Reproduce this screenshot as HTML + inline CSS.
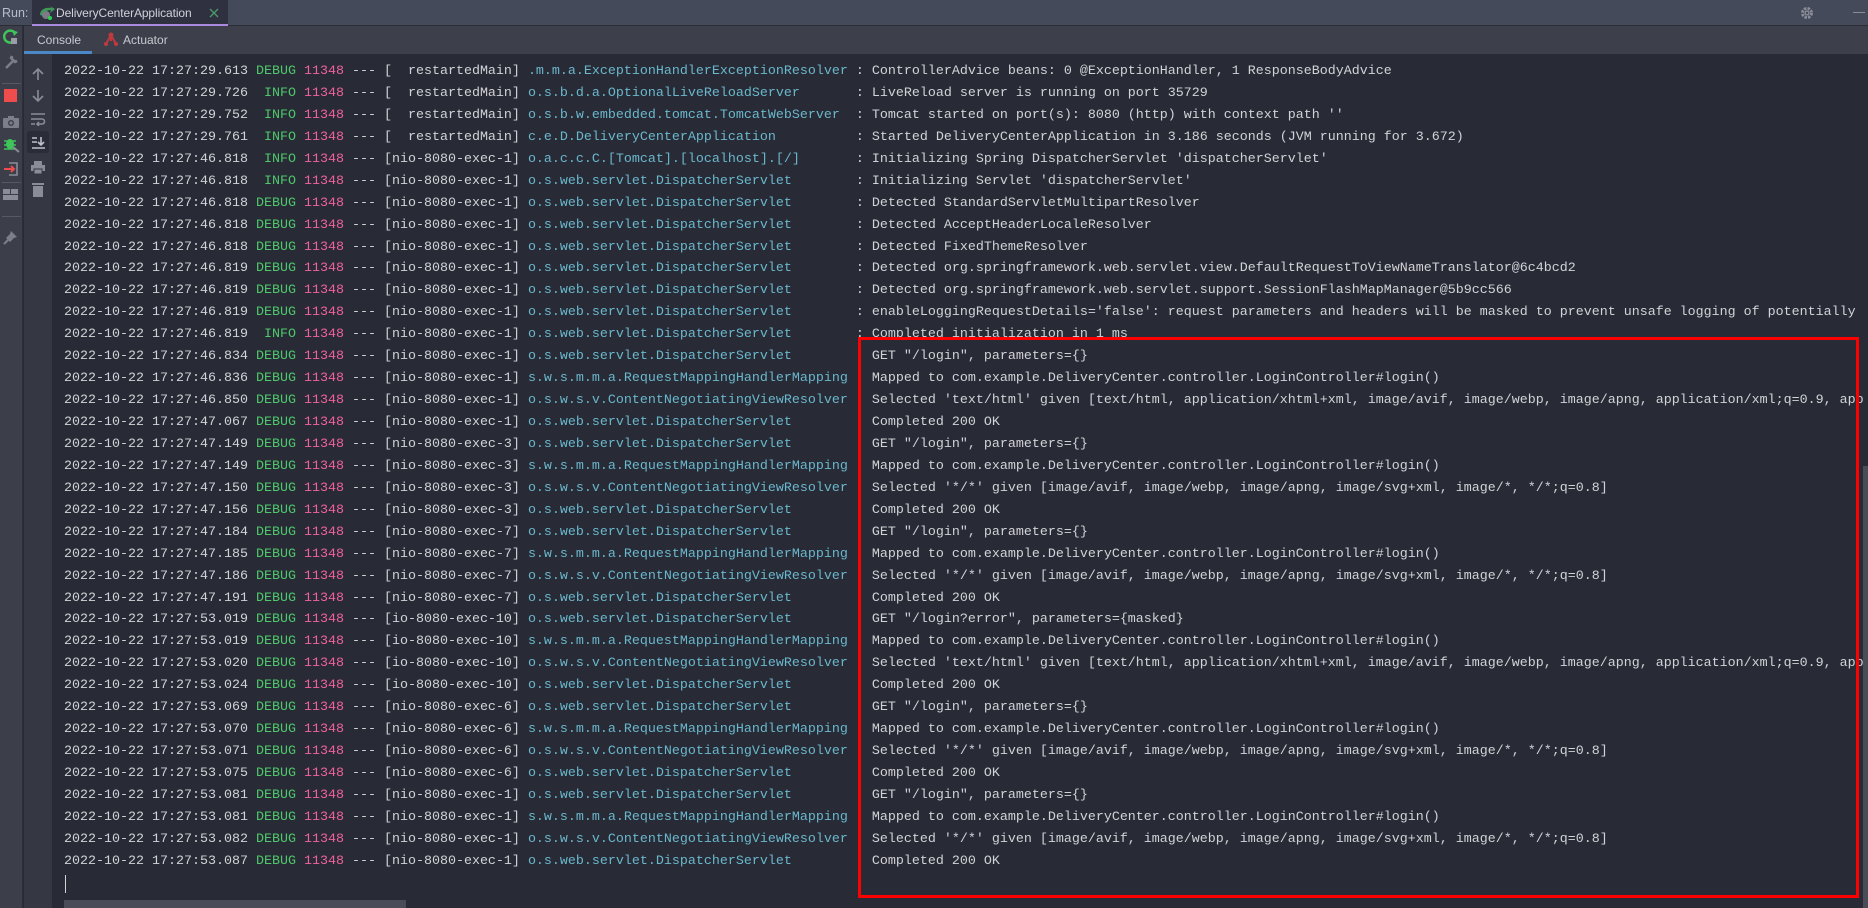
<!DOCTYPE html>
<html><head><meta charset="utf-8"><style>
*{margin:0;padding:0;box-sizing:border-box}
body{width:1868px;height:908px;background:#282a36;overflow:hidden;position:relative;font-family:"Liberation Sans",sans-serif}
.top{position:absolute;left:0;top:0;width:1868px;height:26px;background:#454a5b;border-bottom:1px solid #2a2c36}
.run{position:absolute;left:2px;top:6px;font-size:12.5px;color:#b8bcc8}
.tab{position:absolute;left:32px;top:0;width:196px;height:26px;background:#2f3140;border-bottom:2px solid #a98ae0}
.tab span{position:absolute;left:24px;top:6px;font-size:12px;letter-spacing:-0.1px;color:#d0d2da}
.sub{position:absolute;left:24px;top:26px;width:1844px;height:28px;background:#3d3f4a}
.lt{position:absolute;left:0;top:26px;width:23px;height:882px;background:#3c3e4a;border-right:1px solid #2c2e38}
.lt2{position:absolute;left:24px;top:54px;width:28px;height:854px;background:#353743}
.con{position:absolute;left:52px;top:54px;width:1811px;height:854px;background:#282a36;overflow:hidden}
.log{position:absolute;left:12px;top:7px;font-family:"Liberation Mono",monospace;font-size:13.33px;line-height:21.94px;white-space:pre;color:#d2d3d6}
.g{color:#4ec86a}.p{color:#f0639a}.c{color:#6ab8cc}
.box{position:absolute;left:858px;top:337px;width:1001px;height:561px;border:3px solid #ff0000}
.vs{position:absolute;left:1863px;top:466px;width:5px;height:442px;background:#4a4c57}
.hs{position:absolute;left:64px;top:900px;width:342px;height:8px;background:#4a4c57}
.cur{position:absolute;left:65px;top:875px;width:1px;height:18px;background:#d2d3d6}
.ic{position:absolute}
</style></head><body>
<div class="top">
<div class="run">Run:</div>
<div class="tab">
<svg class="ic" style="left:6px;top:5px" width="18" height="16"><path d="M2 10 C2 4 8 2 14 3 L12 1 L17 4 L12 8 L13 5 C9 5 6 7 6 11 Z" fill="#3f9a5a"/><circle cx="8" cy="10" r="4" fill="#7a7c86"/><circle cx="12" cy="13" r="2" fill="#2bd14a"/></svg>
<span>DeliveryCenterApplication</span>
<svg class="ic" style="left:177px;top:8px" width="10" height="10"><path d="M1 1L9 9M9 1L1 9" stroke="#4f9a6a" stroke-width="1.3"/></svg>
</div>
<svg class="ic" style="left:1800px;top:6px" width="14" height="14"><circle cx="7" cy="7" r="4.5" fill="none" stroke="#8a8d98" stroke-width="3" stroke-dasharray="2.4 1.2"/><circle cx="7" cy="7" r="2.5" fill="#8a8d98"/><circle cx="7" cy="7" r="1.2" fill="#454a5b"/></svg>
<div style="position:absolute;top:12px;width:12px;height:1px;background:#8a8d98;left:1853px"></div>
</div>
<div class="sub">
<div style="position:absolute;left:13px;top:7px;font-size:12px;color:#c8cad2">Console</div>
<div style="position:absolute;left:0;top:25px;width:68px;height:3px;background:#4a88c7"></div>
<svg class="ic" style="left:80px;top:6px" width="14" height="14"><path d="M2 12L7 3L12 12M7 3L7 9" stroke="#c0393f" stroke-width="2" fill="none"/><circle cx="7" cy="3" r="2.5" fill="#c0393f"/><circle cx="2" cy="12" r="2" fill="#c0393f"/><circle cx="12" cy="12" r="2" fill="#c0393f"/></svg>
<div style="position:absolute;left:99px;top:7px;font-size:12px;color:#c8cad2">Actuator</div>
</div>
<div class="lt">
<svg class="ic" style="left:3px;top:3px" width="16" height="16"><path d="M12 4A6 6 0 1 0 13 9" stroke="#3fc45a" stroke-width="2.5" fill="none"/><path d="M9 1L15 3L11 7Z" fill="#3fc45a"/><rect x="8" y="9" width="6" height="6" fill="#9a9ca6"/></svg>
<svg class="ic" style="left:3px;top:28px" width="16" height="16"><path d="M3 14L10 7M9 2A4 4 0 0 0 14 7L12 8L8 4Z" stroke="#7c7f8a" stroke-width="2.5" fill="#7c7f8a"/></svg>
<div style="position:absolute;left:2px;top:57px;width:19px;height:1px;background:#555866"></div>
<div style="position:absolute;left:4px;top:63px;width:13px;height:13px;background:#ef4d4d"></div>
<svg class="ic" style="left:2px;top:89px" width="18" height="14"><rect x="1" y="3" width="16" height="10" rx="1" fill="#7c7f8a"/><rect x="6" y="1" width="6" height="3" fill="#7c7f8a"/><circle cx="9" cy="8" r="3" fill="#3c3e4a"/><circle cx="9" cy="8" r="1.6" fill="#7c7f8a"/></svg>
<svg class="ic" style="left:3px;top:110px" width="17" height="17"><ellipse cx="7" cy="8" rx="4" ry="5" fill="#3fc45a"/><path d="M1 5L13 5M1 9L13 9M1 13L13 13" stroke="#3fc45a" stroke-width="1.5"/><path d="M10 11L16 16" stroke="#8a8d98" stroke-width="2"/></svg>
<svg class="ic" style="left:3px;top:135px" width="16" height="16"><path d="M6 2H14V14H6" stroke="#8a8d98" stroke-width="1.6" fill="none"/><path d="M1 8H11M8 5L11 8L8 11" stroke="#ef4d4d" stroke-width="2" fill="none"/></svg>
<div style="position:absolute;left:2px;top:156px;width:19px;height:1px;background:#555866"></div>
<svg class="ic" style="left:3px;top:163px" width="16" height="12"><rect x="0" y="0" width="7" height="5" fill="#8a8d98"/><rect x="8" y="0" width="7" height="5" fill="#8a8d98"/><rect x="0" y="6" width="15" height="5" fill="#8a8d98"/></svg>
<div style="position:absolute;left:2px;top:190px;width:19px;height:1px;background:#555866"></div>
<svg class="ic" style="left:3px;top:203px" width="16" height="16"><path d="M8 2L14 8L11 9L7 13L3 9L7 5Z" fill="#7c7f8a"/><path d="M5 11L1 15" stroke="#7c7f8a" stroke-width="2"/></svg>
</div>
<div class="lt2">
<svg class="ic" style="left:7px;top:13px" width="14" height="14"><path d="M7 13V2M2 7L7 2L12 7" stroke="#8a8d98" stroke-width="1.6" fill="none"/></svg>
<svg class="ic" style="left:7px;top:35px" width="14" height="14"><path d="M7 1V12M2 7L7 12L12 7" stroke="#8a8d98" stroke-width="1.6" fill="none"/></svg>
<svg class="ic" style="left:6px;top:58px" width="16" height="14"><path d="M1 2H15M1 7H12A2.5 2.5 0 0 1 12 12H8M1 12H5M9 10L7 12L9 14" stroke="#8a8d98" stroke-width="1.6" fill="none"/></svg>
<div style="position:absolute;left:3px;top:77px;width:22px;height:22px;background:#2a2c37;border-radius:3px"></div>
<svg class="ic" style="left:7px;top:81px" width="15" height="15"><path d="M1 3H6M1 7H6M1 13H14M10 2V10M7 7L10 10L13 7" stroke="#c0c2ca" stroke-width="1.6" fill="none"/></svg>
<svg class="ic" style="left:6px;top:106px" width="16" height="15"><rect x="4" y="1" width="8" height="4" fill="#8a8d98"/><rect x="1" y="5" width="14" height="6" fill="#8a8d98"/><rect x="4" y="9" width="8" height="5" fill="#8a8d98" stroke="#353743"/></svg>
<svg class="ic" style="left:7px;top:128px" width="14" height="16"><rect x="1" y="1" width="12" height="2" fill="#8a8d98"/><rect x="2" y="4" width="10" height="11" fill="#8a8d98"/></svg>
</div>
<div class="con">
<div class="log">2022-10-22 17:27:29.613 <span class="g">DEBUG</span> <span class="p">11348</span> --- [  restartedMain] <span class="c">.m.m.a.ExceptionHandlerExceptionResolver</span> : ControllerAdvice beans: 0 @ExceptionHandler, 1 ResponseBodyAdvice
2022-10-22 17:27:29.726  <span class="g">INFO</span> <span class="p">11348</span> --- [  restartedMain] <span class="c">o.s.b.d.a.OptionalLiveReloadServer      </span> : LiveReload server is running on port 35729
2022-10-22 17:27:29.752  <span class="g">INFO</span> <span class="p">11348</span> --- [  restartedMain] <span class="c">o.s.b.w.embedded.tomcat.TomcatWebServer </span> : Tomcat started on port(s): 8080 (http) with context path ''
2022-10-22 17:27:29.761  <span class="g">INFO</span> <span class="p">11348</span> --- [  restartedMain] <span class="c">c.e.D.DeliveryCenterApplication         </span> : Started DeliveryCenterApplication in 3.186 seconds (JVM running for 3.672)
2022-10-22 17:27:46.818  <span class="g">INFO</span> <span class="p">11348</span> --- [nio-8080-exec-1] <span class="c">o.a.c.c.C.[Tomcat].[localhost].[/]      </span> : Initializing Spring DispatcherServlet 'dispatcherServlet'
2022-10-22 17:27:46.818  <span class="g">INFO</span> <span class="p">11348</span> --- [nio-8080-exec-1] <span class="c">o.s.web.servlet.DispatcherServlet       </span> : Initializing Servlet 'dispatcherServlet'
2022-10-22 17:27:46.818 <span class="g">DEBUG</span> <span class="p">11348</span> --- [nio-8080-exec-1] <span class="c">o.s.web.servlet.DispatcherServlet       </span> : Detected StandardServletMultipartResolver
2022-10-22 17:27:46.818 <span class="g">DEBUG</span> <span class="p">11348</span> --- [nio-8080-exec-1] <span class="c">o.s.web.servlet.DispatcherServlet       </span> : Detected AcceptHeaderLocaleResolver
2022-10-22 17:27:46.818 <span class="g">DEBUG</span> <span class="p">11348</span> --- [nio-8080-exec-1] <span class="c">o.s.web.servlet.DispatcherServlet       </span> : Detected FixedThemeResolver
2022-10-22 17:27:46.819 <span class="g">DEBUG</span> <span class="p">11348</span> --- [nio-8080-exec-1] <span class="c">o.s.web.servlet.DispatcherServlet       </span> : Detected org.springframework.web.servlet.view.DefaultRequestToViewNameTranslator@6c4bcd2
2022-10-22 17:27:46.819 <span class="g">DEBUG</span> <span class="p">11348</span> --- [nio-8080-exec-1] <span class="c">o.s.web.servlet.DispatcherServlet       </span> : Detected org.springframework.web.servlet.support.SessionFlashMapManager@5b9cc566
2022-10-22 17:27:46.819 <span class="g">DEBUG</span> <span class="p">11348</span> --- [nio-8080-exec-1] <span class="c">o.s.web.servlet.DispatcherServlet       </span> : enableLoggingRequestDetails='false': request parameters and headers will be masked to prevent unsafe logging of potentially sensitive data
2022-10-22 17:27:46.819  <span class="g">INFO</span> <span class="p">11348</span> --- [nio-8080-exec-1] <span class="c">o.s.web.servlet.DispatcherServlet       </span> : Completed initialization in 1 ms
2022-10-22 17:27:46.834 <span class="g">DEBUG</span> <span class="p">11348</span> --- [nio-8080-exec-1] <span class="c">o.s.web.servlet.DispatcherServlet       </span>   GET "/login", parameters={}
2022-10-22 17:27:46.836 <span class="g">DEBUG</span> <span class="p">11348</span> --- [nio-8080-exec-1] <span class="c">s.w.s.m.m.a.RequestMappingHandlerMapping</span>   Mapped to com.example.DeliveryCenter.controller.LoginController#login()
2022-10-22 17:27:46.850 <span class="g">DEBUG</span> <span class="p">11348</span> --- [nio-8080-exec-1] <span class="c">o.s.w.s.v.ContentNegotiatingViewResolver</span>   Selected 'text/html' given [text/html, application/xhtml+xml, image/avif, image/webp, image/apng, application/xml;q=0.9, application/signed-exchange]
2022-10-22 17:27:47.067 <span class="g">DEBUG</span> <span class="p">11348</span> --- [nio-8080-exec-1] <span class="c">o.s.web.servlet.DispatcherServlet       </span>   Completed 200 OK
2022-10-22 17:27:47.149 <span class="g">DEBUG</span> <span class="p">11348</span> --- [nio-8080-exec-3] <span class="c">o.s.web.servlet.DispatcherServlet       </span>   GET "/login", parameters={}
2022-10-22 17:27:47.149 <span class="g">DEBUG</span> <span class="p">11348</span> --- [nio-8080-exec-3] <span class="c">s.w.s.m.m.a.RequestMappingHandlerMapping</span>   Mapped to com.example.DeliveryCenter.controller.LoginController#login()
2022-10-22 17:27:47.150 <span class="g">DEBUG</span> <span class="p">11348</span> --- [nio-8080-exec-3] <span class="c">o.s.w.s.v.ContentNegotiatingViewResolver</span>   Selected '*/*' given [image/avif, image/webp, image/apng, image/svg+xml, image/*, */*;q=0.8]
2022-10-22 17:27:47.156 <span class="g">DEBUG</span> <span class="p">11348</span> --- [nio-8080-exec-3] <span class="c">o.s.web.servlet.DispatcherServlet       </span>   Completed 200 OK
2022-10-22 17:27:47.184 <span class="g">DEBUG</span> <span class="p">11348</span> --- [nio-8080-exec-7] <span class="c">o.s.web.servlet.DispatcherServlet       </span>   GET "/login", parameters={}
2022-10-22 17:27:47.185 <span class="g">DEBUG</span> <span class="p">11348</span> --- [nio-8080-exec-7] <span class="c">s.w.s.m.m.a.RequestMappingHandlerMapping</span>   Mapped to com.example.DeliveryCenter.controller.LoginController#login()
2022-10-22 17:27:47.186 <span class="g">DEBUG</span> <span class="p">11348</span> --- [nio-8080-exec-7] <span class="c">o.s.w.s.v.ContentNegotiatingViewResolver</span>   Selected '*/*' given [image/avif, image/webp, image/apng, image/svg+xml, image/*, */*;q=0.8]
2022-10-22 17:27:47.191 <span class="g">DEBUG</span> <span class="p">11348</span> --- [nio-8080-exec-7] <span class="c">o.s.web.servlet.DispatcherServlet       </span>   Completed 200 OK
2022-10-22 17:27:53.019 <span class="g">DEBUG</span> <span class="p">11348</span> --- [io-8080-exec-10] <span class="c">o.s.web.servlet.DispatcherServlet       </span>   GET "/login?error", parameters={masked}
2022-10-22 17:27:53.019 <span class="g">DEBUG</span> <span class="p">11348</span> --- [io-8080-exec-10] <span class="c">s.w.s.m.m.a.RequestMappingHandlerMapping</span>   Mapped to com.example.DeliveryCenter.controller.LoginController#login()
2022-10-22 17:27:53.020 <span class="g">DEBUG</span> <span class="p">11348</span> --- [io-8080-exec-10] <span class="c">o.s.w.s.v.ContentNegotiatingViewResolver</span>   Selected 'text/html' given [text/html, application/xhtml+xml, image/avif, image/webp, image/apng, application/xml;q=0.9, application/signed-exchange]
2022-10-22 17:27:53.024 <span class="g">DEBUG</span> <span class="p">11348</span> --- [io-8080-exec-10] <span class="c">o.s.web.servlet.DispatcherServlet       </span>   Completed 200 OK
2022-10-22 17:27:53.069 <span class="g">DEBUG</span> <span class="p">11348</span> --- [nio-8080-exec-6] <span class="c">o.s.web.servlet.DispatcherServlet       </span>   GET "/login", parameters={}
2022-10-22 17:27:53.070 <span class="g">DEBUG</span> <span class="p">11348</span> --- [nio-8080-exec-6] <span class="c">s.w.s.m.m.a.RequestMappingHandlerMapping</span>   Mapped to com.example.DeliveryCenter.controller.LoginController#login()
2022-10-22 17:27:53.071 <span class="g">DEBUG</span> <span class="p">11348</span> --- [nio-8080-exec-6] <span class="c">o.s.w.s.v.ContentNegotiatingViewResolver</span>   Selected '*/*' given [image/avif, image/webp, image/apng, image/svg+xml, image/*, */*;q=0.8]
2022-10-22 17:27:53.075 <span class="g">DEBUG</span> <span class="p">11348</span> --- [nio-8080-exec-6] <span class="c">o.s.web.servlet.DispatcherServlet       </span>   Completed 200 OK
2022-10-22 17:27:53.081 <span class="g">DEBUG</span> <span class="p">11348</span> --- [nio-8080-exec-1] <span class="c">o.s.web.servlet.DispatcherServlet       </span>   GET "/login", parameters={}
2022-10-22 17:27:53.081 <span class="g">DEBUG</span> <span class="p">11348</span> --- [nio-8080-exec-1] <span class="c">s.w.s.m.m.a.RequestMappingHandlerMapping</span>   Mapped to com.example.DeliveryCenter.controller.LoginController#login()
2022-10-22 17:27:53.082 <span class="g">DEBUG</span> <span class="p">11348</span> --- [nio-8080-exec-1] <span class="c">o.s.w.s.v.ContentNegotiatingViewResolver</span>   Selected '*/*' given [image/avif, image/webp, image/apng, image/svg+xml, image/*, */*;q=0.8]
2022-10-22 17:27:53.087 <span class="g">DEBUG</span> <span class="p">11348</span> --- [nio-8080-exec-1] <span class="c">o.s.web.servlet.DispatcherServlet       </span>   Completed 200 OK</div>
</div>
<div class="box"></div>
<div class="vs"></div>
<div class="hs"></div>
<div class="cur"></div>
</body></html>
